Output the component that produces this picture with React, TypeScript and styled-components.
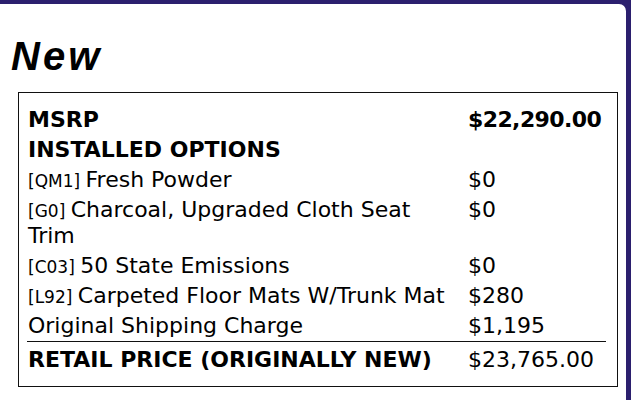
import React from "react";
import styled, { createGlobalStyle } from "styled-components";

const Global = createGlobalStyle`
  html, body { margin: 0; padding: 0; background: #2b1f6e; }
  body { font-family: "DejaVu Sans", Verdana, sans-serif; color: #000; }
`;

const Page = styled.div`
  padding: 4px 5px 0 0;
  min-height: 400px;
  box-sizing: border-box;
`;

const Card = styled.div`
  background: #fff;
  border-top-right-radius: 7px;
  min-height: 420px;
  padding: 1px 0 0 0;
  box-sizing: border-box;
`;

const Heading = styled.h1`
  margin: 29px 0 0 11px;
  font-family: "Liberation Sans", Arial, sans-serif;
  font-style: italic;
  font-weight: 700;
  font-size: 40px;
  letter-spacing: 3px;
  line-height: 44px;
  height: 58px;
`;

const Box = styled.div`
  margin-left: 18px;
  width: 600px;
  box-sizing: border-box;
  border: 1px solid #111;
  padding: 12px 11px 11px 8px;
`;

const Grid = styled.div`
  display: grid;
  grid-template-columns: 440px 1fr;
  font-size: 22px;
  line-height: 26px;
`;

const Cell = styled.div<{ $bold?: boolean; $total?: boolean }>`
  padding: ${(p) => (p.$total ? "5px 0 2px 1px" : "2px 0 2px 1px")};
  font-weight: ${(p) => (p.$bold ? 700 : 400)};
  border-top: ${(p) => (p.$total ? "1px solid #111" : "none")};
  white-space: pre-wrap;
`;

const Desc = styled(Cell)`
  padding-right: 10px;
`;

const Value = styled(Cell)`
  letter-spacing: ${(p) => (p.$bold ? "-0.6px" : "0")};
`;

const Code = styled.span`
  font-size: 17px;
  line-height: 0;
`;

type Row = { code?: string; label: string; value: string; bold?: boolean; valueBold?: boolean; total?: boolean };

const rows: Row[] = [
  { label: "MSRP", value: "$22,290.00", bold: true, valueBold: true },
  { label: "INSTALLED OPTIONS", value: "", bold: true },
  { code: "QM1", label: "Fresh Powder", value: "$0" },
  { code: "G0", label: "Charcoal, Upgraded Cloth Seat Trim", value: "$0" },
  { code: "C03", label: "50 State Emissions", value: "$0" },
  { code: "L92", label: "Carpeted Floor Mats W/Trunk Mat", value: "$280" },
  { label: "Original Shipping Charge", value: "$1,195" },
  { label: "RETAIL PRICE (ORIGINALLY NEW)", value: "$23,765.00", bold: true, total: true },
];

export default function App() {
  return (
    <>
      <Global />
      <Page>
        <Card>
          <Heading>New</Heading>
          <Box>
            <Grid>
              {rows.map((r, i) => (
                <React.Fragment key={i}>
                  <Desc $bold={r.bold} $total={r.total}>
                    {r.code && <Code>[{r.code}] </Code>}
                    {r.label}
                  </Desc>
                  <Value $bold={r.valueBold} $total={r.total}>
                    {r.value}
                  </Value>
                </React.Fragment>
              ))}
            </Grid>
          </Box>
        </Card>
      </Page>
    </>
  );
}
